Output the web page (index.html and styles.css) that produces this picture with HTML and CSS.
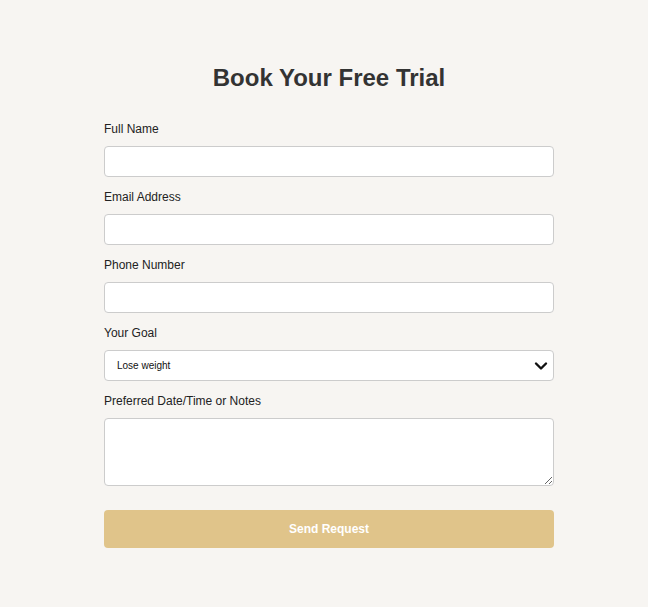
FILE: index.html
```html
<!DOCTYPE html>
<html lang="en">
<head>
<meta charset="utf-8">
<title>Book Your Free Trial</title>
<link rel="stylesheet" href="styles.css">
</head>
<body>
<main class="page">
  <form class="booking">
    <h1 class="title">Book Your Free Trial</h1>
    <div class="field">
      <label class="label" for="name">Full Name</label>
      <input class="control" id="name" type="text">
    </div>
    <div class="field">
      <label class="label" for="email">Email Address</label>
      <input class="control" id="email" type="email">
    </div>
    <div class="field">
      <label class="label" for="phone">Phone Number</label>
      <input class="control" id="phone" type="tel">
    </div>
    <div class="field">
      <label class="label" for="goal">Your Goal</label>
      <div class="select-wrap">
        <select class="control select" id="goal">
          <option>Lose weight</option>
          <option>Build muscle</option>
          <option>Improve fitness</option>
        </select>
        <svg class="chevron" width="14" height="10" viewBox="0 0 14 10"><path d="M2 2.5 L7 7.5 L12 2.5" fill="none" stroke="#111" stroke-width="2.4" stroke-linecap="round" stroke-linejoin="round"/></svg>
      </div>
    </div>
    <div class="field">
      <label class="label" for="notes">Preferred Date/Time or Notes</label>
      <textarea class="control area" id="notes"></textarea>
    </div>
    <button class="submit" type="button">Send Request</button>
  </form>
</main>
</body>
</html>
```
FILE: styles.css
```css
* { box-sizing: border-box; }
html, body { margin: 0; padding: 0; }
body {
  background: #f7f5f2;
  font-family: "Liberation Sans", Arial, sans-serif;
  color: #222;
}
.page {
  display: flex;
  justify-content: center;
  padding: 64px 0 0 10px;
}
.booking {
  width: 450px;
  display: flex;
  flex-direction: column;
}
.title {
  margin: 0 0 30px;
  text-align: center;
  font-size: 24px;
  line-height: 28px;
  font-weight: bold;
  color: #333;
}
.field {
  display: flex;
  flex-direction: column;
  margin-bottom: 13px;
}
.label {
  font-size: 12px;
  line-height: 14px;
  margin-bottom: 10px;
  color: #222;
}
.control {
  width: 100%;
  height: 31px;
  border: 1px solid #cccccc;
  border-radius: 4px;
  background: #fff;
  font-family: "Liberation Sans", Arial, sans-serif;
  font-size: 12px;
  padding: 0 12px;
  margin: 0;
  outline: none;
}
.select-wrap { position: relative; }
.select {
  appearance: none;
  -webkit-appearance: none;
  font-size: 10px;
  color: #111;
  padding-left: 12px;
}
.chevron {
  position: absolute;
  right: 6px;
  top: 11px;
  pointer-events: none;
}
.area {
  height: 68px;
  resize: vertical;
  padding: 8px 12px;
  display: block;
}
.submit {
  margin-top: 11px;
  height: 38px;
  border: none;
  border-radius: 4px;
  background: #e0c48a;
  color: #fff;
  font-family: "Liberation Sans", Arial, sans-serif;
  font-size: 12px;
  font-weight: bold;
  cursor: pointer;
}
```
